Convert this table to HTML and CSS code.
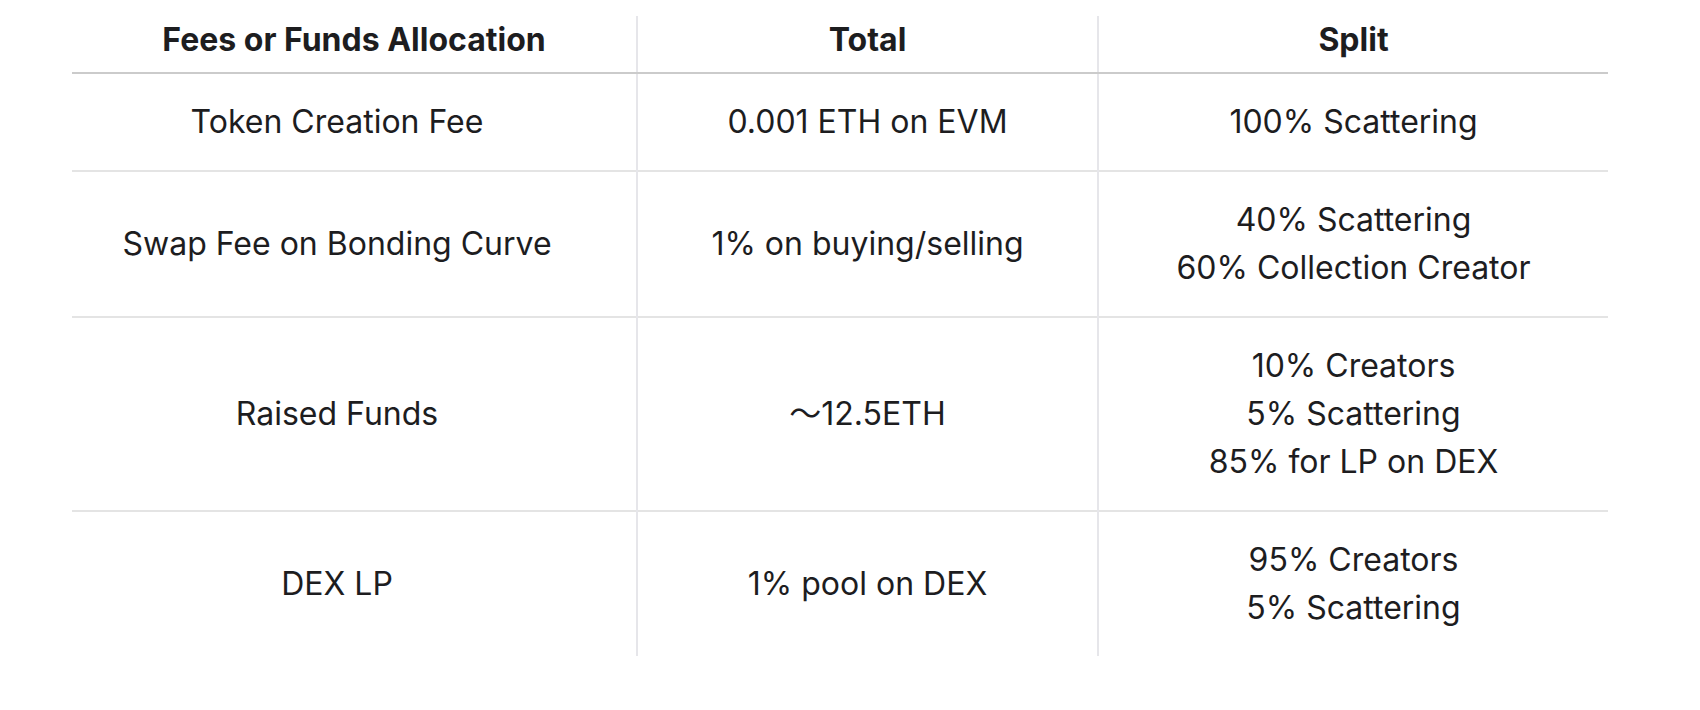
FILE: index.html
```html
<!DOCTYPE html>
<html lang="en">
  <head>
    <meta charset="UTF-8" />
    <meta name="viewport" content="width=device-width, initial-scale=1.0" />
    <title>Fees Allocation</title>
    <link rel="stylesheet" href="styles.css">
  </head>
  <body>
    <table class="fee-table">
      <colgroup>
        <col class="col-name">
        <col class="col-total">
        <col class="col-split">
      </colgroup>
      <thead>
        <tr>
          <th>Fees or Funds Allocation</th>
          <th>Total</th>
          <th>Split</th>
        </tr>
      </thead>
      <tbody>
        <tr>
          <td>Token Creation Fee</td>
          <td>0.001 ETH on EVM</td>
          <td>100% Scattering</td>
        </tr>
        <tr>
          <td>Swap Fee on Bonding Curve</td>
          <td>1% on buying/selling</td>
          <td>40% Scattering<br>60% Collection Creator</td>
        </tr>
        <tr>
          <td>Raised Funds</td>
          <td>～12.5ETH</td>
          <td>10% Creators<br>5% Scattering<br>85% for LP on DEX</td>
        </tr>
        <tr>
          <td>DEX LP</td>
          <td>1% pool on DEX</td>
          <td>95% Creators<br>5% Scattering</td>
        </tr>
      </tbody>
    </table>
  </body>
</html>
```

FILE: styles.css
```css
body {
  margin: 0;
  background: #fff;
  font-family: Inter, "Noto Sans", "Noto Sans CJK SC", sans-serif;
  color: #1d1d1f;
}
.fee-table {
  margin: 16px 0 0 72px;
  width: 1536px;
  table-layout: fixed;
  border-collapse: collapse;
  font-size: 32px;
  line-height: 48px;
}
.col-name {
  width: 565px;
}
.col-total {
  width: 461px;
}
.col-split {
  width: 510px;
}
.fee-table th,
.fee-table td {
  text-align: center;
  vertical-align: middle;
  padding: 24px 8px;
}
.fee-table td:first-child {
  padding-right: 42px;
}
.fee-table th {
  font-weight: 700;
  padding: 0 8px 8px;
  border-bottom: 2px solid #cbcbcb;
}
.fee-table th + th,
.fee-table td + td {
  border-left: 2px solid #e6e6ea;
}
.fee-table tbody tr + tr td {
  border-top: 2px solid #e4e4e4;
}
```
